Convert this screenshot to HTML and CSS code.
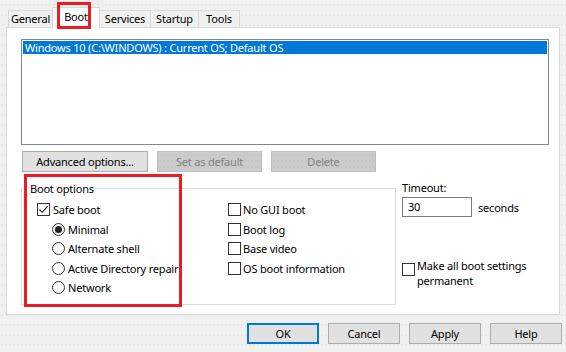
FILE: index.html
```html
<!DOCTYPE html>
<html>
<head>
<meta charset="utf-8">
<link rel="stylesheet" href="styles.css">
</head>
<body>
<div class="dialog">
  <div class="tabs">
    <div class="tab t-general">General</div>
    <div class="tab t-boot active">Boot</div>
    <div class="tab t-services">Services</div>
    <div class="tab t-startup">Startup</div>
    <div class="tab t-tools">Tools</div>
  </div>
  <div class="panel">
    <div class="listbox">
      <div class="item selected">Windows 10 (C:\WINDOWS) : Current OS; Default OS</div>
    </div>
    <div class="btnrow">
      <div class="btn b-adv">Advanced options...</div>
      <div class="btn b-def disabled">Set as default</div>
      <div class="btn b-def disabled">Delete</div>
    </div>
    <div class="lower">
      <fieldset class="group">
        <legend>Boot options</legend>
        <div class="cols">
          <div class="col col-left">
            <div class="row"><span class="cb checked"><svg width="11" height="11" viewBox="0 0 11 11"><path d="M1.5 5.5 L4.2 8.3 L9.6 2.4" fill="none" stroke="#222" stroke-width="1.1"/></svg></span><span>Safe boot</span></div>
            <div class="row indent"><span class="rb on"></span><span>Minimal</span></div>
            <div class="row indent"><span class="rb"></span><span>Alternate shell</span></div>
            <div class="row indent"><span class="rb"></span><span>Active Directory repair</span></div>
            <div class="row indent"><span class="rb"></span><span>Network</span></div>
          </div>
          <div class="col col-right">
            <div class="row"><span class="cb"></span><span class="cbl">No GUI boot</span></div>
            <div class="row"><span class="cb"></span><span class="cbl">Boot log</span></div>
            <div class="row"><span class="cb"></span><span class="cbl">Base video</span></div>
            <div class="row"><span class="cb"></span><span class="cbl">OS boot information</span></div>
          </div>
        </div>
      </fieldset>
      <div class="side">
        <div class="tlabel">Timeout:</div>
        <div class="trow"><div class="tinput">30</div><span class="secs">seconds</span></div>
        <div class="perm"><span class="cb"></span><div class="permtext"><div class="pline">Make all boot settings</div><div class="pline">permanent</div></div></div>
      </div>
    </div>
  </div>
  <div class="footer">
    <div class="btn fb default">OK</div>
    <div class="btn fb">Cancel</div>
    <div class="btn fb">Apply</div>
    <div class="btn fb">Help</div>
  </div>
  <div class="annot annot-tab"></div>
  <div class="annot annot-group"></div>
</div>
</body>
</html>
```
FILE: styles.css
```css
* { box-sizing: border-box; }
html, body { margin: 0; padding: 0; }
body {
  background: #f0f0f0;
  font-family: "Noto Sans", "Open Sans", sans-serif;
  font-size: 11px;
  letter-spacing: -0.2px;
  color: #000;
}
.dialog {
  position: relative;
  width: 566px;
  height: 352px;
  display: flex;
  flex-direction: column;
  background-color: #f0f0f0;
  background-image: radial-gradient(circle, #e3e3e3 0.6px, transparent 0.9px);
  background-size: 4px 10px;
  overflow: hidden;
}
.tabs {
  display: flex;
  align-items: flex-end;
  height: 27px;
  padding-left: 8px;
  position: relative;
  z-index: 2;
}
.tab {
  height: 17px;
  border: 1px solid #d9d9d9;
  border-bottom: none;
  background: #f0f0f0;
  text-align: center;
  line-height: 15px;
}
.t-general { width: 44px; border-right: none; }
.t-boot { width: 48px; }
.t-services { width: 51px; border-left: none; }
.t-startup { width: 48px; border-left: none; }
.t-tools { width: 41px; border-left: none; }
.tab.active {
  height: 21px;
  margin-bottom: -1px;
  background: #fff;
  line-height: 17px;
}
.panel {
  margin: 0 6px;
  height: 288px;
  border: 1px solid #d9d9d9;
  background: #fff;
  padding: 11px 10px 0 14px;
  display: flex;
  flex-direction: column;
}
.listbox {
  height: 106px;
  border: 1px solid #828790;
  padding: 1px;
}
.item {
  height: 13px;
  line-height: 13px;
  padding-left: 2px;
  white-space: nowrap;
}
.item.selected {
  background: #0078d7;
  color: #fff;
}
.btnrow {
  display: flex;
  gap: 9px;
  margin-top: 6px;
  margin-left: 1px;
}
.btn {
  height: 21px;
  border: 1px solid #adadad;
  background: #e1e1e1;
  display: flex;
  align-items: center;
  justify-content: center;
  line-height: 15px;
  padding-bottom: 1px;
}
.b-adv { width: 126px; }
.b-def { width: 105px; }
.btn.disabled {
  background-color: #cccccc;
  background-image: radial-gradient(circle, #c4c4c4 0.6px, transparent 0.9px);
  background-size: 4px 6px;
  border-color: #bfbfbf;
  color: #838383;
}
.lower {
  display: flex;
  margin-top: 9px;
}
.group {
  margin: 0;
  width: 375px;
  height: 124px;
  border: 1px solid #dcdcdc;
  padding: 4px 0 0 15px;
}
.group legend {
  margin-left: -8px;
  padding: 0 1px;
  line-height: 15px;
}
.cols { display: flex; }
.col-left { width: 191px; }
.row {
  height: 19.5px;
  display: flex;
  align-items: center;
  gap: 3px;
  white-space: nowrap;
}
.row.indent { padding-left: 15px; }
.cb {
  width: 13px;
  height: 13px;
  border: 1px solid #333;
  background: #fff;
  flex: none;
  display: flex;
  align-items: center;
  justify-content: center;
}
.cbl { margin-left: -1px; }
.rb {
  width: 13px;
  height: 13px;
  border: 1px solid #333;
  border-radius: 50%;
  background: #fff;
  flex: none;
  display: flex;
  align-items: center;
  justify-content: center;
}
.rb.on::after {
  content: "";
  width: 7px;
  height: 7px;
  border-radius: 50%;
  background: #222;
}
.side {
  margin-left: 6px;
  display: flex;
  flex-direction: column;
}
.tlabel { line-height: 15px; margin-top: -1px; }
.trow {
  display: flex;
  align-items: center;
  gap: 6px;
  margin-top: 2px;
}
.tinput {
  width: 70px;
  height: 20px;
  border: 1px solid #7a7a7a;
  background: #fff;
  padding-left: 5px;
  line-height: 17px;
}
.perm {
  display: flex;
  align-items: flex-start;
  gap: 2px;
  margin-top: 46px;
}
.permtext {
  margin-top: -5px;
}
.pline {
  height: 15px;
  line-height: 15px;
  white-space: nowrap;
}
.footer {
  display: flex;
  justify-content: flex-end;
  gap: 9px;
  margin-top: 8px;
  padding-right: 4px;
}
.fb { width: 72px; }
.fb.default { border: 2px solid #0078d7; }
.annot {
  position: absolute;
  border: 3px solid #ec1c24;
  pointer-events: none;
  z-index: 5;
}
.annot-tab { left: 57px; top: 2px; width: 34px; height: 27px; }
.annot-group { left: 24px; top: 174px; width: 158px; height: 133px; }
```
